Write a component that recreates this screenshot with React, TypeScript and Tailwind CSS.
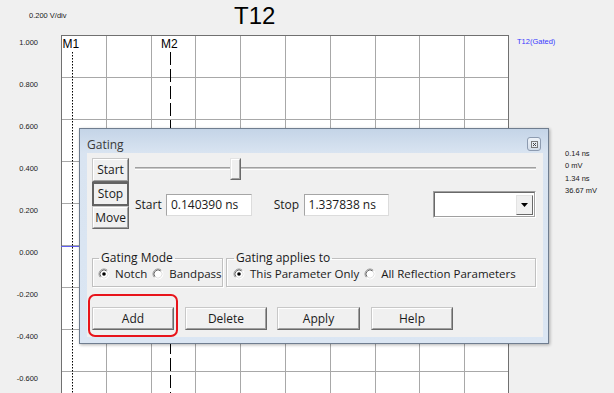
import React from "react";

function Chart() {
  const vx = [1, 2, 3, 4, 5, 6, 7, 8, 9].map((i) => Math.round(i * 44.8) + 0.5);
  const hy = [1, 2, 3, 4, 5, 6, 7, 8].map((j) => 42 * j + 0.5);
  return (
    <svg width="448" height="358" viewBox="0 0 448 358" className="block">
      <rect x="0" y="0" width="448" height="358" fill="#ffffff" />
      {vx.map((x) => (
        <line key={"v" + x} x1={x} y1={0} x2={x} y2={358} stroke="#a8a8a8" strokeWidth="1" />
      ))}
      {hy.map((y) => (
        <line key={"h" + y} x1={0} y1={y} x2={448} y2={y} stroke="#a8a8a8" strokeWidth="1" />
      ))}
      <rect x="0.5" y="0.5" width="447" height="400" fill="none" stroke="#707070" strokeWidth="1" />
      <line x1="0" y1="211.5" x2="448" y2="211.5" stroke="#6060f0" strokeWidth="1" />
      <line x1="11.5" y1="17" x2="11.5" y2="358" stroke="#000" strokeWidth="1" strokeDasharray="1.5 1.5" />
      <line x1="109.5" y1="17" x2="109.5" y2="358" stroke="#000" strokeWidth="1" strokeDasharray="13 4" />
      <text x="1.5" y="13" fontSize="12" fontFamily="'Liberation Sans', Arial, sans-serif" fill="#000">M1</text>
      <text x="100" y="13" fontSize="12" fontFamily="'Liberation Sans', Arial, sans-serif" fill="#000">M2</text>
    </svg>
  );
}

function Radio({ checked }: { checked: boolean }) {
  return (
    <svg width="12" height="12" viewBox="0 0 12 12" className="shrink-0">
      <circle cx="6" cy="6" r="5" fill="#ffffff" />
      <path d="M2.46 9.54 A5 5 0 0 1 9.54 2.46" fill="none" stroke="#9a9a9a" strokeWidth="1" />
      <path d="M3.17 8.83 A4 4 0 0 1 8.83 3.17" fill="none" stroke="#6a6a6a" strokeWidth="1" />
      <path d="M9.54 2.46 A5 5 0 0 1 2.46 9.54" fill="none" stroke="#ffffff" strokeWidth="1" />
      <path d="M8.83 3.17 A4 4 0 0 1 3.17 8.83" fill="none" stroke="#e3e3e3" strokeWidth="1" />
      {checked && <circle cx="6" cy="6" r="1.8" fill="#000000" />}
    </svg>
  );
}

function RadioItem({ checked, label }: { checked: boolean; label: string }) {
  return (
    <div className="flex items-center gap-[5px]">
      <Radio checked={checked} />
      <span className="text-[11.5px] leading-[14px] whitespace-nowrap">{label}</span>
    </div>
  );
}

function Btn({ label, cls }: { label: string; cls: string }) {
  return (
    <div className={"border border-t-[#c8c8c8] border-l-[#c8c8c8] border-r-[#696969] border-b-[#696969] bg-[#f0f0f0] " + cls}>
      <div className="w-full h-full flex items-center justify-center border border-t-white border-l-white border-r-[#a0a0a0] border-b-[#a0a0a0] text-[12px] leading-[16px]">
        {label}
      </div>
    </div>
  );
}

function Input({ value }: { value: string }) {
  return (
    <div className="w-[86px] h-[22px] bg-white border border-t-[#a5a5a5] border-l-[#a5a5a5] border-r-[#dcdcdc] border-b-[#dcdcdc] pl-[4px] flex items-center text-[12px] leading-[16px]">
      {value}
    </div>
  );
}

function Dialog() {
  return (
    <div className="absolute left-[79px] top-[128px] w-[470px] h-[216px] flex flex-col border border-[#6f7d8f] bg-[linear-gradient(to_bottom,#c4d4e7,#d9e4f1_24px,#dbe6f3)] shadow-[1px_1px_3px_rgba(0,0,0,0.3)] font-['Open_Sans',sans-serif] text-[#1a1a1a]">
      <div className="h-[24px] flex items-start justify-between pl-[7px] pr-[7px]">
        <div className="pt-[8px] text-[12px] leading-[16px] text-[#3a3a3a]">Gating</div>
        <div className="mt-[8px] w-[14px] h-[14px] rounded-[3px] border border-[#8d9bb0] bg-[linear-gradient(to_bottom,#eef3f9,#d3dde9)] flex items-center justify-center">
          <svg width="7" height="7" viewBox="0 0 7 7">
            <rect x="0.5" y="0.5" width="6" height="6" fill="#e8edf3" stroke="#7a7a7a" strokeWidth="1" />
            <path d="M2 2 L5 5 M5 2 L2 5" stroke="#444" strokeWidth="1" />
          </svg>
        </div>
      </div>
      <div className="relative ml-[7px] mr-[5px] mb-[6px] flex-1 bg-[#f0f0f0] flex flex-col">
        <div className="flex pt-[5px] pl-[5px]">
          <div className="flex flex-col w-[37px]">
            <Btn label="Start" cls="h-[24px]" />
            <div className="h-[24px] border-2 border-[#626262] bg-[#f0f0f0] flex items-center justify-center text-[12px] leading-[16px]">
              Stop
            </div>
            <Btn label="Move" cls="h-[23px]" />
          </div>
          <div className="ml-[6px] w-[401px] flex flex-col">
            <div className="relative h-[22px]">
              <div className="absolute left-0 right-0 top-[9px] h-[3px] border-t border-t-[#a0a0a0] border-b border-b-white bg-[#c8c8c8]" />
              <div className="absolute left-[95px] top-0 w-[11px] h-[22px] border border-t-[#e3e3e3] border-l-[#e3e3e3] border-r-[#696969] border-b-[#696969] bg-[#f0f0f0]">
                <div className="w-full h-full border border-t-white border-l-white border-r-[#a0a0a0] border-b-[#a0a0a0]" />
              </div>
            </div>
            <div className="mt-[11px] flex items-center">
              <span className="w-[31px] text-[12px] leading-[16px]">Start</span>
              <Input value="0.140390 ns" />
              <span className="ml-[22px] w-[30px] text-[12px] leading-[16px]">Stop</span>
              <Input value="1.337838 ns" />
              <div className="ml-[44px] w-[103px] h-[27px] border border-t-[#a0a0a0] border-l-[#a0a0a0] border-r-white border-b-white">
                <div className="w-full h-full border border-t-[#696969] border-l-[#696969] border-r-[#a0a0a0] border-b-[#a0a0a0] bg-white flex items-center justify-end pr-[1px]">
                  <div className="w-[17px] h-[20px] border border-t-[#e3e3e3] border-l-[#e3e3e3] border-r-[#696969] border-b-[#696969] bg-[#f0f0f0] flex items-center justify-center">
                    <svg width="7" height="4" viewBox="0 0 7 4">
                      <path d="M0 0 L7 0 L3.5 4 Z" fill="#000" />
                    </svg>
                  </div>
                </div>
              </div>
            </div>
          </div>
        </div>

        <div className="mt-[22px] pl-[5px] flex gap-[3px]">
          <fieldset className="w-[131px] border border-[#c0c0c0] shadow-[inset_1px_1px_0_#ffffff,1px_1px_0_#ffffff] pl-[5px] pb-[4px]">
            <legend className="ml-[1px] px-[2px] text-[12px] leading-[14px]">Gating Mode</legend>
            <div className="mt-[1px] flex items-center gap-[5px] h-[16px]">
              <RadioItem checked={true} label="Notch" />
              <RadioItem checked={false} label="Bandpass" />
            </div>
          </fieldset>
          <fieldset className="w-[310px] border border-[#c0c0c0] shadow-[inset_1px_1px_0_#ffffff,1px_1px_0_#ffffff] pl-[6px] pb-[4px]">
            <legend className="ml-[1px] px-[2px] text-[12px] leading-[14px]">Gating applies to</legend>
            <div className="mt-[1px] flex items-center gap-[5px] h-[16px]">
              <RadioItem checked={true} label="This Parameter Only" />
              <RadioItem checked={false} label="All Reflection Parameters" />
            </div>
          </fieldset>
        </div>

        <div className="mt-[20px] pl-[5px] flex">
          <Btn label="Add" cls="w-[82px] h-[23px]" />
          <Btn label="Delete" cls="ml-[11px] w-[82px] h-[23px]" />
          <Btn label="Apply" cls="ml-[10px] w-[83px] h-[23px]" />
          <Btn label="Help" cls="ml-[11px] w-[82px] h-[23px]" />
        </div>

        <div className="absolute left-[1px] top-[141px] w-[90px] h-[43px] border-2 border-[#e8141b] rounded-[7px]" />
      </div>
    </div>
  );
}

export default function App() {
  const yLabels = ["1.000", "0.800", "0.600", "0.400", "0.200", "0.000", "-0.200", "-0.400", "-0.600"];
  return (
    <div className="relative w-[614px] h-[393px] overflow-hidden bg-[#f0f0f0] font-['Liberation_Sans',Arial,sans-serif] text-[#1a1a1a]">
      <div className="flex h-[35px]">
        <div className="w-[234px] pl-[29px] pt-[11px] text-[7.5px] leading-[9px]">0.200 V/div</div>
        <div className="pt-[4px] text-[24px] leading-[24px] text-black">T12</div>
      </div>
      <div className="flex">
        <div className="w-[61px] flex flex-col items-end pr-[23px]">
          {yLabels.map((l) => (
            <div key={l} className="h-[42px] pt-[2.5px] text-[7.5px] leading-[9px]">
              {l}
            </div>
          ))}
        </div>
        <div className="w-[448px] h-[358px] shrink-0">
          <Chart />
        </div>
        <div className="flex flex-col pl-[8px]">
          <div className="pt-[1.5px] text-[7.5px] leading-[9px] text-[#3a3aff]">T12(Gated)</div>
          <div className="mt-[102px] ml-[48px] flex flex-col text-[7.5px] leading-[12.5px] whitespace-nowrap">
            <span>0.14 ns</span>
            <span>0 mV</span>
            <span>1.34 ns</span>
            <span>36.67 mV</span>
          </div>
        </div>
      </div>
      <Dialog />
    </div>
  );
}
